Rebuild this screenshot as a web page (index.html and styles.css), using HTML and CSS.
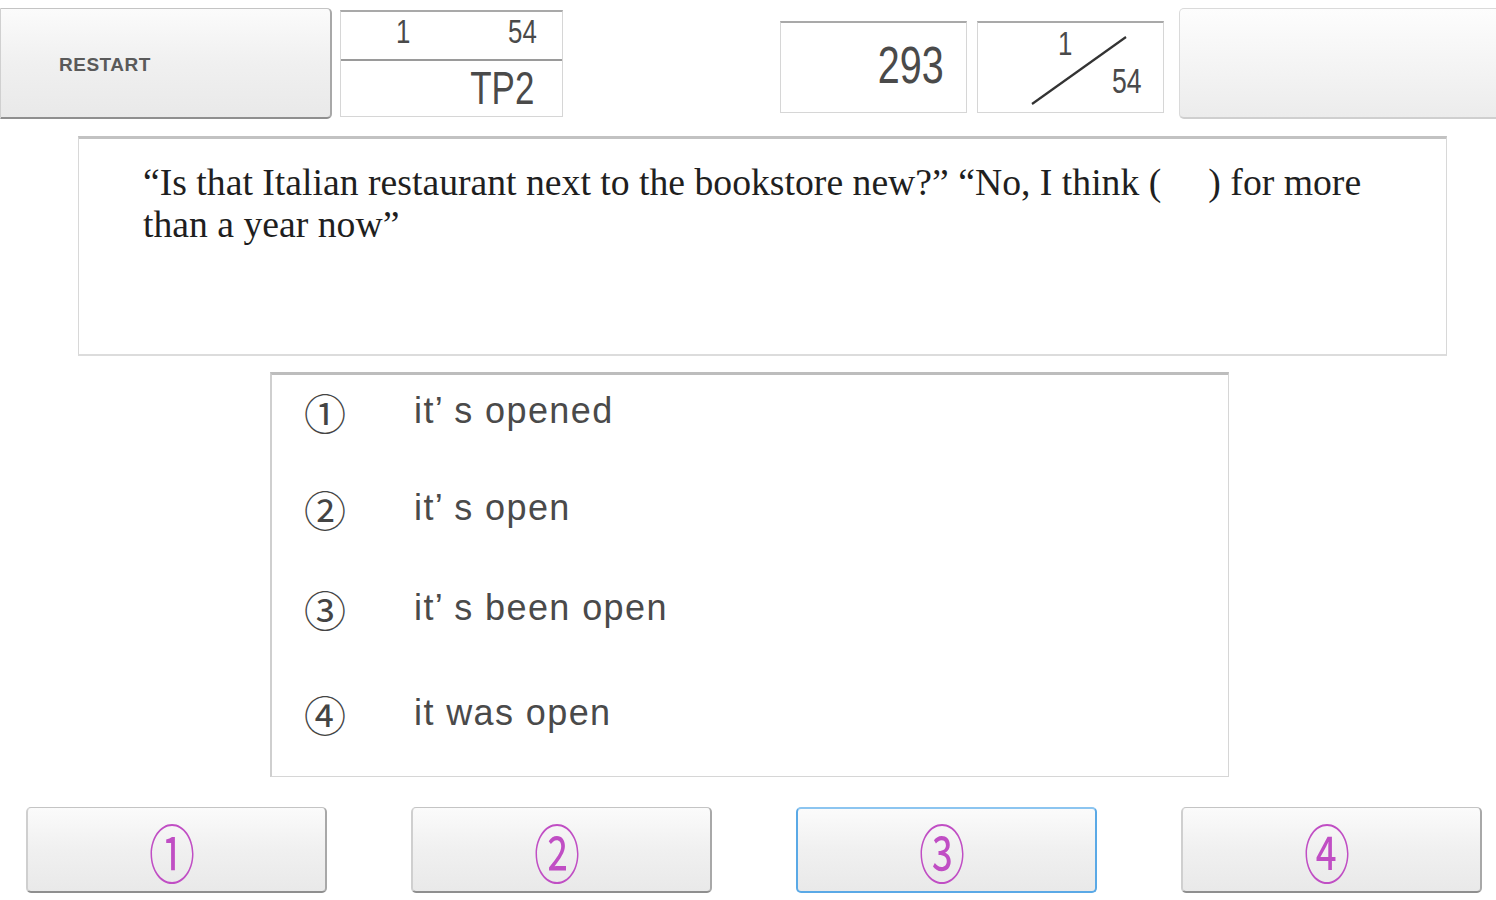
FILE: index.html
```html
<!DOCTYPE html>
<html>
<head>
<meta charset="utf-8">
<link rel="stylesheet" href="styles.css">
</head>
<body>
<div class="page">
  <div class="topbar">
    <div class="btn restart">RESTART</div>
    <div class="counter">
      <div class="counter-top"><span class="narrow c-one">1</span><span class="narrow c-total">54</span></div>
      <div class="counter-bottom"><span class="narrow">TP2</span></div>
    </div>
    <div class="score box"><span class="narrow">293</span></div>
    <div class="fraction box">
      <span class="narrow f-num">1</span>
      <svg class="f-slash" width="187" height="92" viewBox="0 0 187 92"><line x1="55" y1="83" x2="149" y2="16" stroke="#333" stroke-width="2.2"/></svg>
      <span class="narrow f-den">54</span>
    </div>
    <div class="btn blank"></div>
  </div>

  <div class="question">
    <p class="q-text">“Is that Italian restaurant next to the bookstore new?” “No, I think (&nbsp;&nbsp;&nbsp;&nbsp;&nbsp;) for more than a year now”</p>
  </div>

  <div class="options">
    <div class="opt opt1"><span class="num">①</span><span class="otext">it’ s opened</span></div>
    <div class="opt opt2"><span class="num">②</span><span class="otext">it’ s open</span></div>
    <div class="opt opt3"><span class="num">③</span><span class="otext">it’ s been open</span></div>
    <div class="opt opt4"><span class="num">④</span><span class="otext">it was open</span></div>
  </div>

  <div class="answers">
    <div class="btn ans"><span class="anum">①</span></div>
    <div class="btn ans"><span class="anum">②</span></div>
    <div class="btn ans active"><span class="anum">③</span></div>
    <div class="btn ans"><span class="anum">④</span></div>
  </div>
</div>
</body>
</html>
```

FILE: styles.css
```css
html, body {
  margin: 0;
  padding: 0;
  background: #ffffff;
}
body {
  width: 1496px;
  height: 900px;
  overflow: hidden;
  font-family: "Liberation Sans", Arial, sans-serif;
  color: #444;
}
.page {
  display: flex;
  flex-direction: column;
}

/* generic button */
.btn {
  box-sizing: border-box;
  flex-shrink: 0;
  background: linear-gradient(to bottom, #fbfbfb 0%, #f0f0f0 50%, #e9e9e9 100%);
  border: 1px solid #c4c4c4;
  border-bottom: 2px solid #8f8f8f;
  border-right: 2px solid #a8a8a8;
  border-radius: 5px;
}

.narrow {
  display: inline-block;
  font-family: "Liberation Sans", Arial, sans-serif;
  transform: scaleX(0.76);
  font-weight: normal;
}

/* top bar */
.topbar {
  display: flex;
  align-items: flex-start;
  height: 136px;
}
.restart {
  margin-top: 8px;
  width: 332px;
  height: 111px;
  display: flex;
  align-items: center;
  padding-left: 58px;
  padding-top: 3px;
  font-size: 19px;
  font-weight: bold;
  letter-spacing: 0.5px;
  color: #5a5a5a;
  border-left: 1px solid #d0d0d0;
  border-radius: 0 5px 5px 0;
}
.counter {
  box-sizing: border-box;
  flex-shrink: 0;
  margin-top: 10px;
  margin-left: 8px;
  width: 223px;
  height: 107px;
  border: 1px solid #d6d6d6;
  border-top: 2px solid #a9a9a9;
  display: flex;
  flex-direction: column;
  color: #4a4a4a;
}
.counter-top {
  height: 55px;
  border-bottom: 2px solid #9a9a9a;
  display: flex;
  align-items: center;
  font-size: 34px;
  box-sizing: border-box;
  padding-bottom: 8px;
}
.c-one {
  margin-left: 55px;
  transform-origin: left center;
}
.c-total {
  margin-left: auto;
  margin-right: 25px;
  transform-origin: right center;
}
.counter-bottom {
  flex: 1;
  display: flex;
  align-items: center;
  justify-content: flex-end;
  padding-right: 28px;
  padding-bottom: 2px;
  font-size: 46px;
}
.counter-bottom .narrow {
  transform-origin: right center;
}
.box {
  box-sizing: border-box;
  flex-shrink: 0;
  margin-top: 21px;
  width: 187px;
  height: 92px;
  border: 1px solid #d6d6d6;
  border-top: 2px solid #a9a9a9;
  color: #4a4a4a;
}
.score {
  margin-left: 217px;
  display: flex;
  align-items: center;
  justify-content: flex-end;
  padding-right: 22px;
  padding-bottom: 6px;
  font-size: 52px;
}
.score .narrow {
  transform-origin: right center;
}
.fraction {
  margin-left: 10px;
  position: relative;
}
.f-slash {
  position: absolute;
  left: -1px;
  top: -2px;
}
.f-num {
  position: absolute;
  left: 80px;
  top: 1px;
  font-size: 34px;
  transform-origin: left top;
}
.f-den {
  position: absolute;
  left: 134px;
  top: 38px;
  font-size: 35px;
  transform-origin: left top;
}
.blank {
  margin-top: 8px;
  margin-left: 15px;
  width: 330px;
  height: 111px;
  background: linear-gradient(to bottom, #fdfdfd 0%, #f3f3f3 60%, #ececec 100%);
  border: 1px solid #dadada;
  border-bottom: 2px solid #cfcfcf;
}

/* question */
.question {
  box-sizing: border-box;
  margin-left: 78px;
  width: 1369px;
  height: 220px;
  border: 1px solid #d8d8d8;
  border-top: 3px solid #c2c2c2;
  border-bottom: 2px solid #dcdcdc;
  padding: 22px 60px 0 64px;
}
.q-text {
  margin: 0;
  font-family: "Liberation Serif", "Times New Roman", serif;
  font-size: 37.7px;
  line-height: 42px;
  color: #1f1f1f;
}

/* options */
.options {
  box-sizing: border-box;
  margin-top: 16px;
  margin-left: 270px;
  width: 959px;
  height: 405px;
  border: 1px solid #d6d6d6;
  border-top: 3px solid #bdbdbd;
  border-left: 2px solid #cfcfcf;
  padding-left: 32px;
  padding-top: 14px;
  display: flex;
  flex-direction: column;
}
.opt {
  display: flex;
  align-items: center;
  height: 44px;
}
.opt2 { margin-top: 53px; }
.opt3 { margin-top: 56px; }
.opt4 { margin-top: 61px; }
.num {
  width: 110px;
  font-family: "Noto Sans CJK JP", sans-serif;
  font-size: 42px;
  color: #444;
  font-weight: 400;
}
.otext {
  font-family: "Liberation Sans", Arial, sans-serif;
  font-size: 36px;
  letter-spacing: 1.4px;
  color: #4a4a4a;
}

/* answers */
.answers {
  display: flex;
  margin-top: 30px;
  margin-left: 26px;
  gap: 84px;
}
.ans {
  width: 301px;
  height: 86px;
  display: flex;
  align-items: center;
  justify-content: center;
  border-left: 2px solid #cfcfcf;
}
.ans.active {
  border: 2px solid #5aa9e6;
  border-top: 2px solid #8cc5f0;
}
.anum {
  display: inline-block;
  font-family: "Noto Sans CJK JP", sans-serif;
  font-size: 64px;
  font-weight: 400;
  color: #c04ec4;
  transform: scaleX(0.72);
  line-height: 1;
  margin-left: -10px;
}
```
